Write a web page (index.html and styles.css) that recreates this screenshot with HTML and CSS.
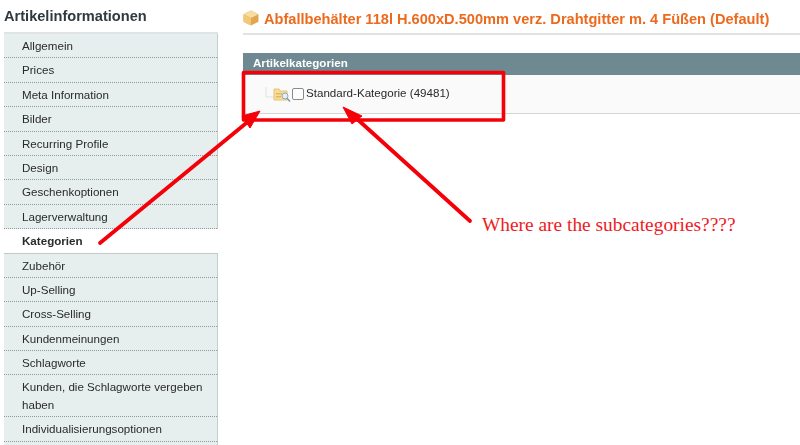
FILE: index.html
```html
<!DOCTYPE html>
<html lang="de">
<head>
<meta charset="utf-8">
<title>Artikelinformationen</title>
<link rel="stylesheet" href="styles.css">
</head>
<body>
<div class="page">
  <aside class="side">
    <h3 class="side-title">Artikelinformationen</h3>
    <ul class="tabs">
      <li class="tab">Allgemein</li>
      <li class="tab">Prices</li>
      <li class="tab">Meta Information</li>
      <li class="tab">Bilder</li>
      <li class="tab">Recurring Profile</li>
      <li class="tab">Design</li>
      <li class="tab">Geschenkoptionen</li>
      <li class="tab">Lagerverwaltung</li>
      <li class="tab active">Kategorien</li>
      <li class="tab">Zubehör</li>
      <li class="tab">Up-Selling</li>
      <li class="tab">Cross-Selling</li>
      <li class="tab">Kundenmeinungen</li>
      <li class="tab">Schlagworte</li>
      <li class="tab two">Kunden, die Schlagworte vergeben haben</li>
      <li class="tab">Individualisierungsoptionen</li>
    </ul>
  </aside>
  <main class="main">
    <div class="head">
      <svg class="box-icon" width="16" height="16" viewBox="0 0 15 15">
        <path d="M7.5 0.500 L14.500 4 V11 L7.5 14.500 L0.500 11 V4Z" fill="#e0a650"/>
        <path d="M7.5 0.500 L14.500 4 L7.5 7.500 L0.500 4Z" fill="#f7dda0"/>
        <path d="M7.5 7.500 V14.500 L0.500 11 V4Z" fill="#f1c878"/>
      </svg>
      <h1 class="title">Abfallbehälter 118l H.600xD.500mm verz. Drahtgitter m. 4 Füßen (Default)</h1>
    </div>
    <section class="panel">
      <h4 class="panel-head">Artikelkategorien</h4>
      <div class="panel-body">
        <svg class="tree-line" width="9" height="12" viewBox="0 0 9 12"><path d="M1 0V10H9" fill="none" stroke="#dde1e4" stroke-width="1"/></svg>
        <svg class="folder" width="18" height="17" viewBox="0 0 18 17">
          <path d="M1 3H6L7.5 5H14V14H1Z" fill="#f6dd94" stroke="#e8c27a" stroke-width="1"/>
          <rect x="3" y="7" width="6" height="1.400" fill="#e0b46c"/>
          <rect x="3" y="10" width="5" height="1.400" fill="#e0b46c"/>
          <circle cx="12" cy="10" r="3" fill="#e4eef4" stroke="#8fa9bd" stroke-width="1"/>
          <path d="M14 12.200L17 15.500" stroke="#7f9bb2" stroke-width="1.600"/>
        </svg>
        <span class="check"></span>
        <span class="node">Standard-Kategorie (49481)</span>
      </div>
    </section>
  </main>
</div>
<div class="callout">Where are the subcategories????</div>
<svg class="marks" width="800" height="445" viewBox="0 0 800 445">
  <rect x="243.500" y="72.500" width="260" height="47.500" fill="none" stroke="#f50008" stroke-width="3.600" stroke-linejoin="round"/>
  <path d="M100 243 L250 120" stroke="#f50008" stroke-width="3.800" stroke-linecap="round"/>
  <path d="M470 221 L356 118" stroke="#f50008" stroke-width="3.800" stroke-linecap="round"/>
  <path d="M260 111 L242 116 L250 128Z" fill="#f50008" stroke="#f50008" stroke-linejoin="round"/>
  <path d="M343 107 L362 116 L352 124Z" fill="#f50008" stroke="#f50008" stroke-linejoin="round"/>
</svg>
</body>
</html>
```
FILE: styles.css
```css
html, body { margin: 0; padding: 0; background: #fff; }
body { width: 800px; height: 445px; overflow: hidden; position: relative; font-family: "Liberation Sans", Arial, sans-serif; color: #2f2f2f; }
.page { display: flex; align-items: flex-start; padding-left: 4px; filter: blur(0.35px); }
.side { width: 214px; flex: none; }
.side-title { margin: 0; height: 32px; line-height: 33px; font-size: 14.600px; font-weight: bold; color: #2f3a40; border-bottom: 2px solid #dfe3e5; }
.tabs { list-style: none; margin: 0; padding: 0; background: #e7eeee; border-right: 1px solid #c3cdd0; height: 420px; box-sizing: border-box; }
.tab { height: 24.400px; box-sizing: border-box; padding: 0 0 0 18px; line-height: 24px; font-size: 11.600px; color: #2a2a2a; border-bottom: 1px dotted #8f9a9c; }
.tab.active { background: #fff; font-weight: bold; border-bottom: 1px solid #c2c9cb; margin-right: -1px; }
.tab.two { height: 42px; line-height: 18px; padding-top: 3px; }
.main { flex: 1; padding-left: 25px; min-width: 0; }
.head { height: 33px; display: flex; align-items: center; gap: 5px; border-bottom: 2px solid #dfe3e5; }
.box-icon { flex: none; margin-top: 3px; }
.title { margin: 4px 0 0; font-size: 14.600px; font-weight: bold; color: #ec6a1e; white-space: nowrap; }
.panel { margin-top: 18px; }
.panel-head { margin: 0; height: 22px; background: #6f8992; color: #fff; font-size: 11.600px; font-weight: bold; line-height: 20px; padding-left: 10px; }
.panel-body { height: 39px; box-sizing: border-box; background: #fafafa; border-bottom: 1px solid #d6d6d6; display: flex; align-items: center; padding-left: 22px; }
.tree-line { flex: none; margin-bottom: 3px; }
.folder { flex: none; margin-right: 1px; margin-left: -1px; }
.check { width: 10px; height: 10px; border: 1px solid #8a8a8a; border-radius: 2px; background: #fff; flex: none; margin-right: 2px; margin-bottom: 1px; }
.node { font-size: 11.600px; color: #2a2a2a; white-space: nowrap; margin-bottom: 3px; }
.callout { position: absolute; left: 482px; top: 214px; font-family: "Liberation Serif", "Times New Roman", serif; font-size: 19.400px; color: #ee1c25; white-space: nowrap; }
.marks { position: absolute; left: 0; top: 0; pointer-events: none; }
```
